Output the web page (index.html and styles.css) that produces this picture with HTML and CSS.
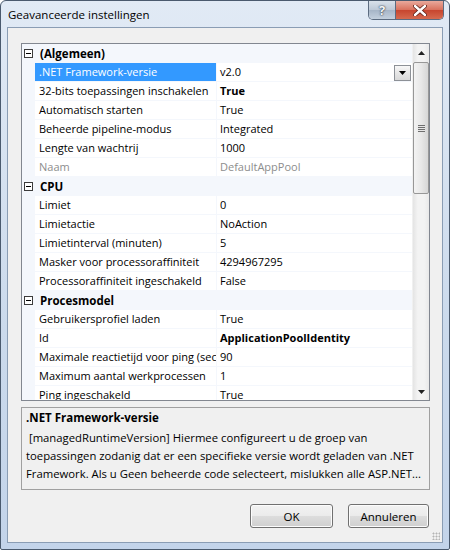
FILE: index.html
```html
<!DOCTYPE html>
<html lang="nl">
<head>
    <meta charset="UTF-8">
    <title>Geavanceerde instellingen</title>
    <link rel="stylesheet" href="styles.css">
</head>
<body>

<div class="window">
    <div class="titlebar">
        <span class="title">Geavanceerde instellingen</span>
        <div class="caption-buttons">
            <span class="cap-help">?</span>
            <span class="cap-close">
                <svg width="14" height="11" viewBox="0 0 14 11">
                    <path d="M2 1 L12 10 M12 1 L2 10" stroke="#5a1d14" stroke-width="4" stroke-linecap="round"/>
                    <path d="M2 1 L12 10 M12 1 L2 10" stroke="#fff" stroke-width="2.4" stroke-linecap="round"/>
                </svg>
            </span>
        </div>
    </div>

    <div class="client">
        <div class="grid">
            <div class="rows">
                <div class="cat"><span class="toggle"></span>(Algemeen)</div>
                <div class="row selected">
                    <span class="name">.NET Framework-versie</span>
                    <span class="value">v2.0
                        <span class="dropdown">
                            <svg width="7" height="4" viewBox="0 0 7 4"><path d="M0 0 L7 0 L3.5 4Z" fill="#000"/></svg>
                        </span>
                    </span>
                </div>
                <div class="row"><span class="name">32-bits toepassingen inschakelen</span><span class="value bold">True</span></div>
                <div class="row"><span class="name">Automatisch starten</span><span class="value">True</span></div>
                <div class="row"><span class="name">Beheerde pipeline-modus</span><span class="value">Integrated</span></div>
                <div class="row"><span class="name">Lengte van wachtrij</span><span class="value">1000</span></div>
                <div class="row readonly"><span class="name">Naam</span><span class="value">DefaultAppPool</span></div>

                <div class="cat"><span class="toggle"></span>CPU</div>
                <div class="row"><span class="name">Limiet</span><span class="value">0</span></div>
                <div class="row"><span class="name">Limietactie</span><span class="value">NoAction</span></div>
                <div class="row"><span class="name">Limietinterval (minuten)</span><span class="value">5</span></div>
                <div class="row"><span class="name">Masker voor processoraffiniteit</span><span class="value">4294967295</span></div>
                <div class="row"><span class="name">Processoraffiniteit ingeschakeld</span><span class="value">False</span></div>

                <div class="cat"><span class="toggle"></span>Procesmodel</div>
                <div class="row"><span class="name">Gebruikersprofiel laden</span><span class="value">True</span></div>
                <div class="row"><span class="name">Id</span><span class="value bold">ApplicationPoolIdentity</span></div>
                <div class="row"><span class="name">Maximale reactietijd voor ping (seconden)</span><span class="value">90</span></div>
                <div class="row"><span class="name">Maximum aantal werkprocessen</span><span class="value">1</span></div>
                <div class="row"><span class="name">Ping ingeschakeld</span><span class="value">True</span></div>
            </div>

            <div class="scrollbar">
                <div class="arrow">
                    <svg width="7" height="4" viewBox="0 0 7 4"><path d="M0 4 L3.5 0 L7 4Z" fill="#222"/></svg>
                </div>
                <div class="thumb"><span class="grip"></span></div>
                <div class="track"></div>
                <div class="arrow">
                    <svg width="7" height="4" viewBox="0 0 7 4"><path d="M0 0 L7 0 L3.5 4Z" fill="#222"/></svg>
                </div>
            </div>
        </div>

        <div class="desc">
            <div class="desc-title">.NET Framework-versie</div>
            <div class="desc-text">&nbsp;[managedRuntimeVersion] Hiermee configureert u de groep van toepassingen zodanig dat er een specifieke versie wordt geladen van .NET Framework. Als u Geen beheerde code selecteert, mislukken alle ASP.NET...</div>
        </div>

        <div class="buttons">
            <button class="btn btn-ok">OK</button>
            <button class="btn btn-cancel">Annuleren</button>
        </div>

        <div class="grip-corner"></div>
    </div>
</div>

</body>
</html>
```

FILE: styles.css
```css
body {
    margin: 0;
    padding: 0;
    width: 450px;
    height: 550px;
    overflow: hidden;
    font-family: 'Open Sans', 'Noto Sans', sans-serif;
    font-size: 11px;
    color: #000;
}
.window {
    box-sizing: border-box;
    width: 450px;
    height: 550px;
    border: 1px solid #4a5a6e;
    border-radius: 6px 6px 2px 2px;
    background: linear-gradient(#e1eaf5, #cbdaec 60%, #c3d4ea);
    padding: 0 6px 6px 6px;
    display: flex;
    flex-direction: column;
}
.titlebar {
    height: 26px;
    display: flex;
    justify-content: space-between;
    align-items: flex-start;
}
.title {
    margin-top: 6px;
    margin-left: 1px;
    font-size: 11.5px;
    color: #000;
}
.caption-buttons {
    display: flex;
    margin-right: -1px;
    border: 1px solid #5b6b80;
    border-top: none;
    border-radius: 0 0 5px 5px;
    overflow: hidden;
    height: 18px;
}
.cap-help {
    width: 26px;
    text-align: center;
    font-weight: bold;
    font-size: 13px;
    line-height: 18px;
    color: #f4f6f9;
    text-shadow: 0 0 2px #2e3a4a, 0 0 1px #2e3a4a;
    background: linear-gradient(#d9e1ea, #bcc8d6 50%, #a6b5c7 51%, #c3d0de);
    border-right: 1px solid #5b6b80;
}
.cap-close {
    width: 47px;
    display: flex;
    align-items: center;
    justify-content: center;
    background: linear-gradient(#e9a99c, #d8705c 50%, #c7452e 51%, #d56a4f);
}
.client {
    position: relative;
    flex: 1;
    background: #f0f0f0;
    border: 1px solid #8a9db4;
    padding: 15px 12px 0 13px;
    display: flex;
    flex-direction: column;
}
.grid {
    height: 356px;
    border: 1px solid #828790;
    background: #fff;
    display: flex;
    overflow: hidden;
}
.rows {
    flex: 1;
    background: #f4f7fc;
    overflow: hidden;
}
.cat {
    height: 19px;
    display: flex;
    align-items: center;
    font-weight: bold;
    font-size: 11.5px;
}
.toggle {
    box-sizing: border-box;
    width: 9px;
    height: 9px;
    border: 1px solid #3c3c3c;
    background: #fff;
    margin: 0 7px 0 2px;
    position: relative;
}
.toggle::after {
    content: "";
    position: absolute;
    left: 1px;
    top: 3px;
    width: 5px;
    height: 1px;
    background: #000;
}
.row {
    height: 19px;
    display: flex;
    margin-left: 13px;
}
.name, .value {
    height: 18px;
    line-height: 18px;
    background: #fff;
    white-space: nowrap;
    overflow: hidden;
}
.name {
    width: 177px;
    padding-left: 4px;
    margin-right: 1px;
}
.value {
    flex: 1;
    padding-left: 3px;
    position: relative;
}
.bold {
    font-weight: bold;
}
.selected .name {
    background: #3399ff;
    color: #fff;
}
.readonly .name, .readonly .value {
    color: #8d8d8d;
}
.dropdown {
    position: absolute;
    right: 1px;
    top: 2px;
    box-sizing: border-box;
    width: 17px;
    height: 16px;
    border: 1px solid #8d9197;
    background: linear-gradient(#f8f8f8, #e6e6e6 50%, #d9d9d9);
    display: flex;
    align-items: center;
    justify-content: center;
}
.scrollbar {
    width: 16px;
    display: flex;
    flex-direction: column;
    background: linear-gradient(to right, #e4e4e4, #f3f3f3 30%, #f3f3f3 70%, #e9e9e9);
    border-left: 1px solid #f0f0f0;
}
.arrow {
    height: 17px;
    display: flex;
    align-items: center;
    justify-content: center;
}
.thumb {
    box-sizing: border-box;
    height: 132px;
    margin: 1px 0 0 0;
    border: 1px solid #979797;
    border-radius: 2px;
    background: linear-gradient(to right, #f3f3f3, #e8e8e8 50%, #d6d6d6);
    display: flex;
    align-items: center;
    justify-content: center;
}
.grip {
    width: 7px;
    height: 7px;
    background: repeating-linear-gradient(#6e6e6e 0 1px, #e6e6e6 1px 2px);
}
.track {
    flex: 1;
}
.desc {
    box-sizing: border-box;
    height: 83px;
    margin-top: 6px;
    border: 1px solid #a0a0a0;
    padding: 1px 4px 0 4px;
    line-height: 18px;
    font-size: 11.3px;
}
.desc-title {
    font-weight: bold;
    font-size: 11.5px;
    margin-bottom: 2px;
}
.buttons {
    display: flex;
    justify-content: flex-end;
    gap: 15px;
    margin-top: 14px;
    padding-right: 1px;
}
.btn {
    box-sizing: border-box;
    height: 24px;
    border: 1px solid #707070;
    border-radius: 3px;
    background: linear-gradient(#f2f2f2, #ebebeb 50%, #dddddd 51%, #cfcfcf);
    box-shadow: inset 0 0 0 1px #fcfcfc;
    font-family: 'Open Sans', 'Noto Sans', sans-serif;
    font-size: 11.5px;
    color: #000;
    padding: 0;
}
.btn-ok {
    width: 83px;
}
.btn-cancel {
    width: 81px;
}
.grip-corner {
    position: absolute;
    right: 2px;
    bottom: 2px;
    width: 8px;
    height: 8px;
    background: radial-gradient(circle, #b4b4b4 0.8px, transparent 1.2px) 0 0 / 3px 3px;
}
```
